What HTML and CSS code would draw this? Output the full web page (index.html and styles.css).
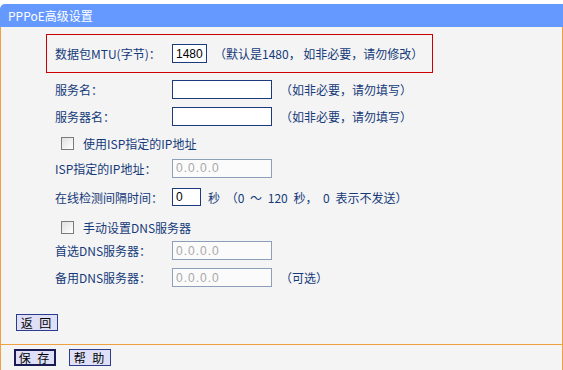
FILE: index.html
```html
<!DOCTYPE html>
<html>
<head>
    <meta charset="utf-8">
    <title>PPPoE高级设置</title>
    <link rel="stylesheet" href="styles.css">
</head>
<body>
<div class="panel">
    <div class="title">PPPoE高级设置</div>

    <div class="content">
        <div class="mtu-box">
            <span class="label">数据包MTU(字节)：</span>
            <input class="txt mtu" type="text" value="1480">
            <span class="hint">（默认是1480， 如非必要，请勿修改）</span>
        </div>

        <div class="row r-service">
            <span class="label">服务名：</span>
            <input class="txt wide" type="text">
            <span class="hint">（如非必要，请勿填写）</span>
        </div>
        <div class="row r-server">
            <span class="label">服务器名：</span>
            <input class="txt wide" type="text">
            <span class="hint">（如非必要，请勿填写）</span>
        </div>
        <div class="row r-check">
            <span class="check"></span>
            <span class="check-text">使用ISP指定的IP地址</span>
        </div>
        <div class="row r-isp">
            <span class="label">ISP指定的IP地址：</span>
            <input class="txt wide off" type="text" value="0.0.0.0" disabled>
        </div>
        <div class="row r-interval">
            <span class="label">在线检测间隔时间：</span>
            <input class="txt short" type="text" value="0">
            <span class="hint near">秒 （0 ～ 120 秒， 0 表示不发送）</span>
        </div>
        <div class="row r-check">
            <span class="check"></span>
            <span class="check-text">手动设置DNS服务器</span>
        </div>
        <div class="row r-dns1">
            <span class="label">首选DNS服务器：</span>
            <input class="txt wide off" type="text" value="0.0.0.0" disabled>
        </div>
        <div class="row r-dns2">
            <span class="label">备用DNS服务器：</span>
            <input class="txt wide off" type="text" value="0.0.0.0" disabled>
            <span class="hint">（可选）</span>
        </div>

        <div class="back-row">
            <button class="btn">返 回</button>
        </div>
    </div>

    <div class="footer">
        <button class="btn save">保 存</button>
        <button class="btn">帮 助</button>
    </div>
</div>
</body>
</html>
```

FILE: styles.css
```css
body, html{
margin: 0;
padding: 0;
background-color: white;
font-family: "Noto Sans CJK SC", "Liberation Sans", sans-serif;
font-size: 12px;
color: #143a7a;
overflow: hidden;
}

.panel{
padding-top: 4px;
}

.title{
height: 23px;
line-height: 23px;
padding-left: 8px;
background-color: #6699ff;
color: white;
border-top-left-radius: 5px;
}

.content{
box-sizing: border-box;
width: 563px;
height: 318px;
background-color: #f4f4f4;
border-left: 1px solid #f0a040;
border-right: 1px solid #f0a040;
border-bottom: 1px solid #f0a040;
padding-top: 7px;
}

.mtu-box{
margin-left: 45px;
width: 377px;
height: 37px;
border: 1px solid #cc0000;
display: flex;
align-items: center;
padding-left: 8px;
}

.label{
width: 117px;
flex-shrink: 0;
}

.row{
display: flex;
align-items: center;
padding-left: 54px;
}

.r-service{ height: 27px; margin-top: 3px; }
.r-server{ height: 27px; }
.r-check{ height: 26px; }
.r-isp{ height: 24px; }
.r-interval{ height: 34px; }
.r-dns1{ height: 21px; }
.r-dns2{ height: 33px; }

.txt{
box-sizing: border-box;
height: 19px;
border: 1px solid #1c3a7c;
background: white;
font-family: "Liberation Sans", sans-serif;
font-size: 12px;
color: black;
padding: 0 3px;
margin: 0;
}

.mtu{ width: 35px; }
.wide{ width: 100px; }
.short{ width: 29px; height: 18px; }

.off{
border-color: #8da0b8;
color: #a8a8a8;
background: #fbfbfb;
letter-spacing: 1px;
}

.hint{
margin-left: 8px;
}
.mtu-box .hint{ margin-left: 7px; }
.near{
margin-left: 7px;
word-spacing: 3px;
}

.check{
box-sizing: border-box;
width: 13px;
height: 13px;
margin-left: 6px;
border: 1px solid #7b7b7b;
background: linear-gradient(135deg, #e0e0e0, #ffffff);
}

.check-text{
margin-left: 9px;
}

.back-row{
margin-top: 20px;
padding-left: 15px;
}

.btn{
box-sizing: border-box;
height: 17px;
width: 42px;
padding: 0;
margin: 0;
border: 1px solid #2c3c8c;
background-color: #dfe0f8;
color: black;
font-family: "Noto Sans CJK SC", sans-serif;
font-size: 12px;
line-height: 15px;
letter-spacing: 2px;
white-space: nowrap;
text-align: center;
}

.footer{
box-sizing: border-box;
width: 563px;
height: 25px;
background-color: #f4f4f4;
border-left: 1px solid #f0a040;
border-right: 1px solid #f0a040;
display: flex;
align-items: center;
padding-left: 13px;
gap: 13px;
}

.save{
border: 2px solid #1a1a55;
line-height: 13px;
}
```
